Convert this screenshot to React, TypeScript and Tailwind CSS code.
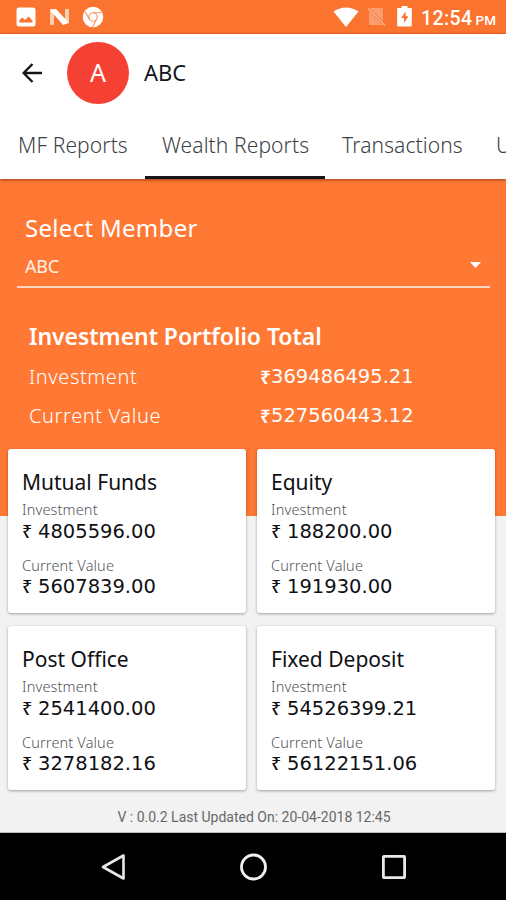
interface Holding {
  name: string;
  investment: string;
  currentValue: string;
}

const TABS = [
  { label: 'MF Reports', className: 'w-[145px] pl-[18px]' },
  { label: 'Wealth Reports', className: 'w-[180px] pl-[17px] border-b-[3px] border-[#15161c]' },
  { label: 'Transactions', className: 'w-[171px] pl-[17px]' },
  { label: 'U', className: 'w-[20px]' },
];

const HOLDINGS: Holding[] = [
  { name: 'Mutual Funds', investment: '4805596.00', currentValue: '5607839.00' },
  { name: 'Equity', investment: '188200.00', currentValue: '191930.00' },
  { name: 'Post Office', investment: '2541400.00', currentValue: '3278182.16' },
  { name: 'Fixed Deposit', investment: '54526399.21', currentValue: '56122151.06' },
];

function StatusBar() {
  return (
    <div className="flex h-[34px] items-center bg-[#fa732f] border-b border-[#f2661c] pl-4 pr-[10px] text-white">
      <svg width="20" height="20" viewBox="0 0 20 20">
        <rect x="0.5" y="0.5" width="19" height="19" rx="2.5" fill="#fff" />
        <path d="M3.5 15.5V13L6.500 10.500 9 13 12.500 9.500 16.500 13.500V15.500z" fill="#fa732f" />
      </svg>
      <svg className="ml-[13px]" width="21" height="18" viewBox="0 0 21 18">
        <path d="M1 1h4v16H1z" fill="#fff" opacity=".65" />
        <path d="M16 1h4v14h-4z" fill="#fff" opacity=".65" />
        <path d="M1 2 7 1 20 15 14 17z" fill="#fff" />
      </svg>
      <svg className="ml-3" width="22" height="22" viewBox="0 0 22 22">
        <circle cx="11" cy="11" r="10.3" fill="#fff" />
        <g fill="none" stroke="#fa8f5a" strokeWidth="1.1">
          <circle cx="11" cy="11" r="4.2" />
          <path d="M11 6.800h8.600M7.400 13.100 3 5.700M14.600 13.100 10.600 21" />
        </g>
      </svg>
      <div className="ml-auto flex items-center">
        <svg width="26" height="20" viewBox="0 0 26 20">
          <path d="M0.5 4.500Q13-3.500 25.500 4.500L13 20z" fill="#fff" />
        </svg>
        <svg className="ml-2" width="19" height="20" viewBox="0 0 19 20">
          <path d="M2 1h14v17H2z" fill="#fff" opacity=".3" />
          <path d="M1 1.500 18 18.500" stroke="#fa732f" strokeWidth="3" />
          <path d="M1 1.500 18 18.500" stroke="#fff" strokeWidth="1.4" opacity=".45" />
        </svg>
        <svg className="ml-[11px]" width="15" height="21" viewBox="0 0 15 21">
          <path d="M4.500 0h6v2H14a.8.8 0 0 1 .8.8v17a.8.8 0 0 1-.8.8H1a.8.8 0 0 1-.8-.8v-17A.8.8 0 0 1 1 2h3.500z" fill="#fff" />
          <path d="M8.700 5.500 4 12h3v5l4.500-6.800h-2.800z" fill="#fa732f" />
        </svg>
        <span className="ml-[9px] flex items-baseline pt-[5px] font-['Roboto'] font-medium">
          <span className="text-[19.5px] leading-6 tracking-[0.4px]">12:54</span>
          <span className="ml-[3px] text-[13.5px] leading-6">PM</span>
        </span>
      </div>
    </div>
  );
}

function Header() {
  return (
    <header className="relative z-10 bg-white shadow-[0_1px_3px_rgba(90,30,0,0.6)]">
      <div className="flex h-[77px] items-center pl-[22px]">
        <svg width="20" height="20" viewBox="0 0 20 20" fill="none" stroke="#15161c" strokeWidth="2.4">
          <path d="M20 10H2M10.500 1 1.600 10l8.900 9" />
        </svg>
        <div className="ml-[25px] flex size-[62px] items-center justify-center rounded-full bg-[#f44133] text-[25px] text-white">
          A
        </div>
        <h1 className="ml-[15px] pb-[2px] text-[22px] leading-8 text-[#15161c]">ABC</h1>
      </div>
      <nav className="flex h-[68px] overflow-hidden text-[21px] font-light tracking-[0.1px] text-[#3c3f47]">
        {TABS.map((tab) => (
          <div key={tab.label} className={`shrink-0 whitespace-nowrap leading-[68px] ${tab.className}`}>
            {tab.label}
          </div>
        ))}
      </nav>
    </header>
  );
}

function TotalRow({ label, amount }: { label: string; amount: string }) {
  return (
    <div className="flex h-[39px] items-center text-[20px]">
      <span className="w-[231px] font-light tracking-[0.6px]">{label}</span>
      <span className="w-[11px] pt-px text-[19px] font-semibold">₹</span>
      <span className="font-['DejaVu_Sans'] text-[19.5px]">{amount}</span>
    </div>
  );
}

function PortfolioTotal() {
  return (
    <section className="h-[337px] bg-[#ff7834] pl-[17px] pr-4 pt-[33px] text-white">
      <div className="pl-2 text-[24px] leading-8 tracking-[0.3px]">Select Member</div>
      <div className="flex h-[44px] items-center justify-between border-b-2 border-[#ffd5c0] pl-2 pr-[9px] pt-[2px]">
        <span className="text-[18px] font-normal leading-6 tracking-[-0.2px] text-[#fff0e8]">ABC</span>
        <svg className="mb-[2px]" width="11" height="6" viewBox="0 0 11 6">
          <path d="M0 0h11L5.500 6z" fill="#fff" />
        </svg>
      </div>
      <div className="mt-8 pl-3">
        <h2 className="pb-[5px] text-[23px] font-semibold leading-8 tracking-[-0.05px]">Investment Portfolio Total</h2>
        <TotalRow label="Investment" amount="369486495.21" />
        <TotalRow label="Current Value" amount="527560443.12" />
      </div>
    </section>
  );
}

function Amount({ value }: { value: string }) {
  return (
    <p className="-mt-[3px] flex h-[22px] items-center">
      <span className="w-4 text-[18px] font-medium">₹</span>
      <span className="pt-px font-['DejaVu_Sans'] text-[19.5px]">{value}</span>
    </p>
  );
}

function HoldingCard({ holding }: { holding: Holding }) {
  return (
    <div className="h-[164px] rounded-[3px] bg-white pl-[14px] pt-[19px] text-[#101014] shadow-[0_1px_3px_rgba(0,0,0,0.35)]">
      <h3 className="text-[21px] leading-7">{holding.name}</h3>
      <p className="text-[14.5px] font-light leading-[27px] tracking-[0.15px] text-[#50535a]">Investment</p>
      <Amount value={holding.investment} />
      <p className="mt-[11px] text-[14.5px] font-light leading-[25px] tracking-[0.15px] text-[#50535a]">Current Value</p>
      <Amount value={holding.currentValue} />
    </div>
  );
}

function NavigationBar() {
  return (
    <div className="flex h-[67px] items-center bg-black pl-[100px]">
      <svg width="26" height="28" viewBox="0 0 26 28" fill="none" stroke="#e8e8e8" strokeWidth="2.6" strokeLinejoin="round">
        <path d="M23.500 2.500v23L3 14z" />
      </svg>
      <svg className="ml-[113px]" width="28" height="28" viewBox="0 0 28 28" fill="none" stroke="#f0f0f0" strokeWidth="2.8">
        <circle cx="14.500" cy="14" r="12" />
      </svg>
      <svg className="ml-[114px]" width="26" height="26" viewBox="0 0 26 26" fill="none" stroke="#e8e8e8" strokeWidth="2.8">
        <rect x="2.400" y="2.400" width="21.200" height="21.200" rx="0.500" />
      </svg>
    </div>
  );
}

export default function App() {
  return (
    <div className="flex h-[900px] w-[506px] flex-col overflow-hidden bg-[#f2f2f2] font-['Noto_Sans','Open_Sans',sans-serif]">
      <StatusBar />
      <Header />
      <PortfolioTotal />
      <main className="-mt-[67px] grid grid-cols-2 gap-x-[11px] gap-y-[13px] pl-2 pr-[11px]">
        {HOLDINGS.map((holding) => (
          <HoldingCard key={holding.name} holding={holding} />
        ))}
      </main>
      <footer className="flex-1 border-b border-[#bbb] pt-[15px] pl-[2px] text-center font-['Roboto'] text-[14px] leading-6 text-[#66686c]">
        V : 0.0.2 Last Updated On: 20-04-2018 12:45
      </footer>
      <NavigationBar />
    </div>
  );
}
